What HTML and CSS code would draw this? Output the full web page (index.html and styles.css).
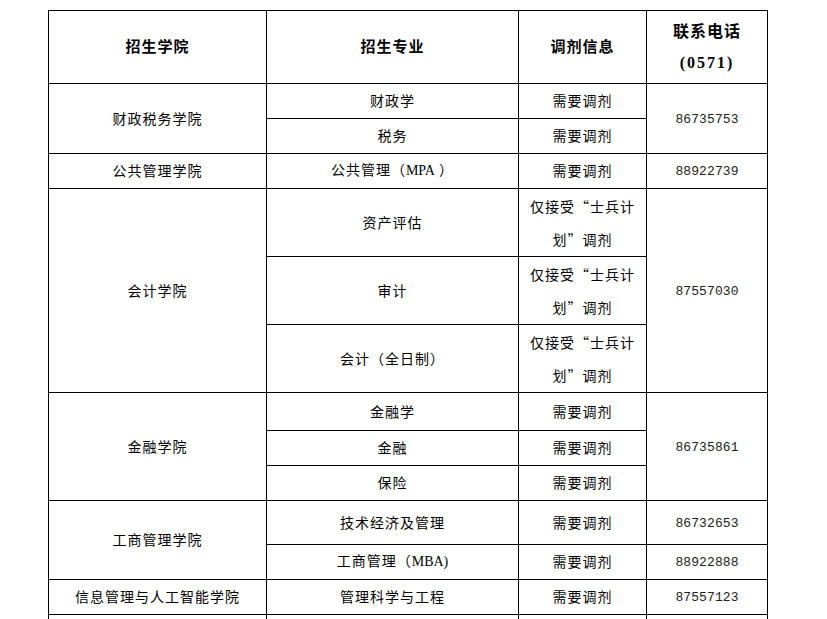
FILE: index.html
```html
<!DOCTYPE html>
<html lang="zh">
<head>
<meta charset="utf-8">
<title>调剂信息</title>
<link rel="stylesheet" href="styles.css">
</head>
<body>
<table class="grid">
  <colgroup>
    <col class="c1"><col class="c2"><col class="c3"><col class="c4">
  </colgroup>
  <thead>
    <tr class="h-head">
      <th>招生学院</th>
      <th>招生专业</th>
      <th>调剂信息</th>
      <th class="phone-head"><span class="ph1">联系电话</span><br><span class="ph2">(0571)</span></th>
    </tr>
  </thead>
  <tbody>
    <tr class="h35">
      <td rowspan="2">财政税务学院</td>
      <td>财政学</td>
      <td>需要调剂</td>
      <td rowspan="2" class="num">86735753</td>
    </tr>
    <tr class="h35">
      <td>税务</td>
      <td>需要调剂</td>
    </tr>
    <tr class="h35">
      <td>公共管理学院</td>
      <td>公共管理（<span class="latin">MPA</span> ）</td>
      <td>需要调剂</td>
      <td class="num">88922739</td>
    </tr>
    <tr class="h68">
      <td rowspan="3">会计学院</td>
      <td>资产评估</td>
      <td class="two">仅接受“士兵计<br>划”调剂</td>
      <td rowspan="3" class="num">87557030</td>
    </tr>
    <tr class="h68">
      <td>审计</td>
      <td class="two">仅接受“士兵计<br>划”调剂</td>
    </tr>
    <tr class="h68">
      <td>会计（全日制）</td>
      <td class="two">仅接受“士兵计<br>划”调剂</td>
    </tr>
    <tr class="h38">
      <td rowspan="3">金融学院</td>
      <td>金融学</td>
      <td>需要调剂</td>
      <td rowspan="3" class="num">86735861</td>
    </tr>
    <tr class="h35">
      <td>金融</td>
      <td>需要调剂</td>
    </tr>
    <tr class="h35">
      <td>保险</td>
      <td>需要调剂</td>
    </tr>
    <tr class="h44">
      <td rowspan="2">工商管理学院</td>
      <td>技术经济及管理</td>
      <td>需要调剂</td>
      <td class="num">86732653</td>
    </tr>
    <tr class="h35">
      <td>工商管理（<span class="latin">MBA)</span></td>
      <td>需要调剂</td>
      <td class="num">88922888</td>
    </tr>
    <tr class="h35">
      <td>信息管理与人工智能学院</td>
      <td>管理科学与工程</td>
      <td>需要调剂</td>
      <td class="num">87557123</td>
    </tr>
    <tr class="h35">
      <td></td>
      <td></td>
      <td></td>
      <td></td>
    </tr>
  </tbody>
</table>
</body>
</html>
```

FILE: styles.css
```css
html, body {
  margin: 0;
  padding: 0;
  background: #ffffff;
}

body {
  font-family: "Noto Sans CJK SC", "Noto Sans", sans-serif;
  color: #000;
  overflow: hidden;
}

.grid {
  border-collapse: collapse;
  table-layout: fixed;
  width: 719px;
  margin: 10px 0 0 48px;
}

.c1 { width: 218px; }
.c2 { width: 252px; }
.c3 { width: 128px; }
.c4 { width: 121px; }

.grid th,
.grid td {
  border: 1px solid #000;
  padding: 0 0 2px 0;
  text-align: center;
  vertical-align: middle;
  font-size: 14px;
  letter-spacing: 1px;
  line-height: 20px;
  font-weight: 400;
}

.grid th {
  font-size: 15px;
  font-weight: 700;
  letter-spacing: 1px;
}

.h-head { height: 73px; }
.h35 { height: 35px; }
.h38 { height: 38px; }
.h44 { height: 44px; }
.h68 { height: 68px; }

.grid th.phone-head {
  line-height: 31px;
  padding: 0 0 1px 0;
}

.ph1 {
  font-size: 16px;
  letter-spacing: 1px;
}

.ph2 {
  font-family: "Liberation Serif", serif;
  font-size: 16px;
  font-weight: 700;
  letter-spacing: 2px;
}

.grid td.two {
  line-height: 33px;
  padding: 0;
}

.grid td.num {
  font-family: "Liberation Mono", "DejaVu Sans Mono", monospace;
  font-size: 13px;
  letter-spacing: 0.1px;
  color: #222;
  padding: 2px 0 0 0;
}

.latin {
  font-family: "Liberation Serif", serif;
  font-size: 14px;
  letter-spacing: 0;
}
```
